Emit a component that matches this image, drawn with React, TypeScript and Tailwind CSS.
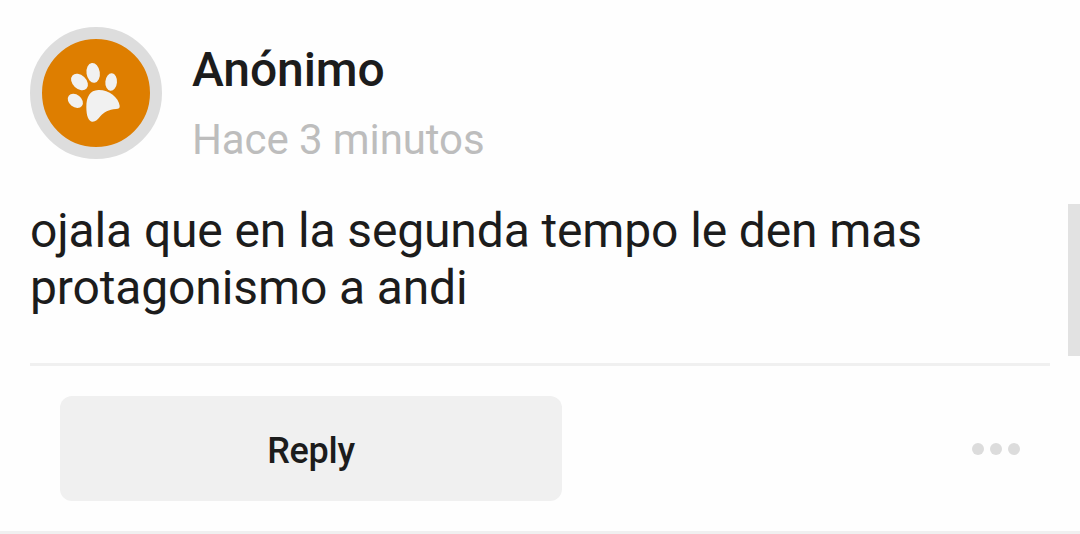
interface Comment {
  author: string;
  time: string;
  text: string;
}

const comment: Comment = {
  author: 'Anónimo',
  time: 'Hace 3 minutos',
  text: 'ojala que en la segunda tempo le den mas protagonismo a andi',
};

function PawIcon() {
  return (
    <svg viewBox="0 3 240 240" className="w-20 h-20 fill-[#f1f1f1]">
      <ellipse cx="58" cy="146.500" rx="25" ry="18.500" transform="rotate(38 58 146.500)" />
      <ellipse cx="70.500" cy="90" rx="29" ry="20.500" transform="rotate(43 70.500 90)" />
      <ellipse cx="111.500" cy="62.500" rx="20" ry="30" transform="rotate(-8 111.500 62.500)" />
      <ellipse cx="165.500" cy="90" rx="17.500" ry="26.500" transform="rotate(5 165.500 90)" />
      <path d="M127 114C158 113 188 136 191 161C192 168 188 170 180 171C158 173 144 180 133 193C125 203 119 209 110 209C97 209 91 191 91 165C91 134 102 115 127 114Z" />
    </svg>
  );
}

function Avatar() {
  return (
    <div className="w-[132px] h-[132px] shrink-0 rounded-full border-12 border-[#dddddd] bg-[#de7e00] flex items-center justify-center">
      <PawIcon />
    </div>
  );
}

export default function App() {
  return (
    <div className="relative w-[1080px] h-[534px] overflow-hidden bg-[#fefefe] border-b-3 border-[#f0f0f0] font-['Roboto',sans-serif] text-[#1c1c1c]">
      <div className="px-[30px] pt-[27px]">
        <div className="flex gap-[30px]">
          <Avatar />
          <div className="pt-[15px]">
            <h2 className="text-5xl leading-[56px] font-medium tracking-[-0.1px]">{comment.author}</h2>
            <p className="mt-[18px] text-[42px] leading-[48px] tracking-[-0.1px] text-[#bdbdbd]">{comment.time}</p>
          </div>
        </div>

        <p className="mt-[38px] text-5xl leading-[57px] tracking-[-0.13px]">{comment.text}</p>

        <div className="mt-[47px] border-t-3 border-[#f0f0f0] px-[30px] pt-[30px] flex items-center justify-between">
          <button className="w-[502px] h-[105px] pt-1 rounded-xl bg-[#f0f0f0] text-4xl font-medium tracking-[-0.25px]">Reply</button>
          <button className="flex gap-1.5" aria-label="Más opciones">
            <span className="w-3 h-3 rounded-full bg-[#dcdcdc]" />
            <span className="w-3 h-3 rounded-full bg-[#dcdcdc]" />
            <span className="w-3 h-3 rounded-full bg-[#dcdcdc]" />
          </button>
        </div>
      </div>

      {/* scroll thumb */}
      <div className="absolute right-0 top-[204px] w-3 h-[152px] bg-[#e2e2e2]" />
    </div>
  );
}
